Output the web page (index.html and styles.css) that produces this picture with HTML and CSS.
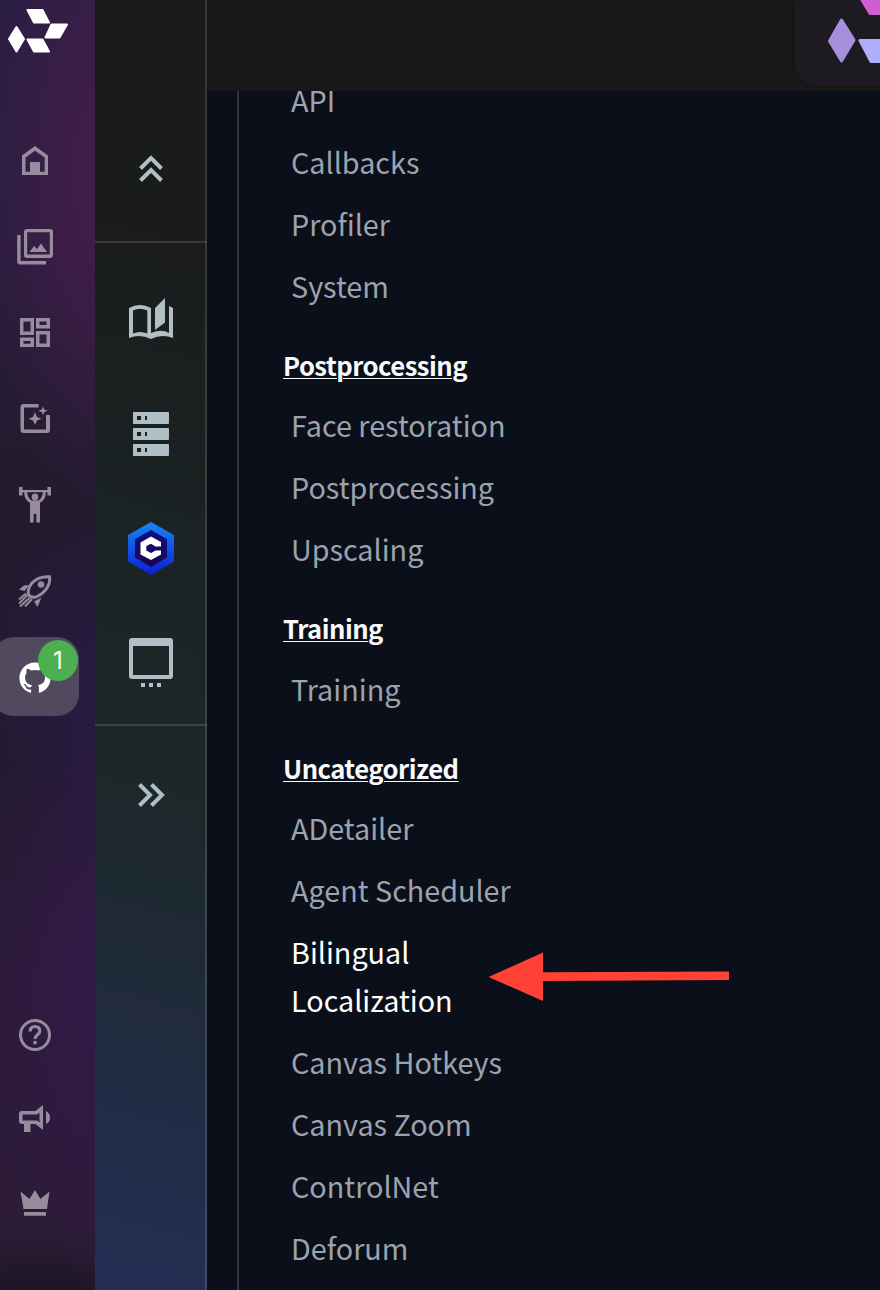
FILE: index.html
```html
<!DOCTYPE html>
<html lang="en">
<head>
<meta charset="utf-8">
<title>Settings</title>
<link rel="stylesheet" href="styles.css">
</head>
<body>
<div class="app">
  <nav class="rail">
    <a class="logo"><svg width="64" height="48" viewBox="6 7 64 48"><g fill="#fff" stroke="#fff" stroke-width="2" stroke-linejoin="round"><path d="M27.500 10H42.500L49 22.500H34Z"/><path d="M51.500 24.500H67L59.500 37.500H45.500Z"/><path d="M16.500 27L24 39L16.500 51.500L9 39Z"/><path d="M27.500 39.500H42.500L49 51.500H34Z"/></g></svg></a>
    <div class="rail-group rail-main">
      <a class="rail-item"><svg width="40" height="40" viewBox="15 141 40 40"><path fill-rule="evenodd" d="M35 146L48 155.500V175H22V155.500ZM35 150.800L25.500 157.500V171.700H30V162H40V171.700H44.700V157.500Z"/></svg></a>
      <a class="rail-item"><svg width="40" height="40" viewBox="15 227 40 40"><path fill-rule="evenodd" d="M27 229H50Q53 229 53 232V255Q53 258 50 258H27Q24 258 24 255V232Q24 229 27 229ZM27.200 232.200V254.500H49.800V232.200ZM17.200 235H20.600V261H46V264.400H20Q17.200 264.400 17.200 261.500ZM29.500 252L34 246L37 249L41 243.500L47 252Z"/></svg></a>
      <a class="rail-item"><svg width="40" height="40" viewBox="15 313 40 40"><path fill-rule="evenodd" d="M20 318H34V335H20ZM23.500 321.500V331.500H30.500V321.500ZM36 318H50V328.500H36ZM39.500 321.500V325H46.500V321.500ZM20 337.500H34V347H20ZM23.500 341V343.700H30.500V341ZM36 331H50V347H36ZM39.500 334.500V343.500H46.500V334.500Z"/></svg></a>
      <a class="rail-item"><svg width="40" height="40" viewBox="15 399 40 40"><path d="M38.500 404V407.500H24V429.500H46V415H50V430Q50 433 47 433H23.500Q20.500 433 20.500 430V407Q20.500 404 23.500 404ZM35 412.300L37 417L41.500 418.800L37 420.600L35 425L33 420.600L28.500 418.800L33 417ZM43 406.300L44.200 409.500L47.700 410.800L44.200 412L43 415.300L41.700 412L38.300 410.800L41.700 409.500Z"/></svg></a>
      <a class="rail-item"><svg width="40" height="40" viewBox="15 485 40 40"><path d="M19 487H22.500V490H47.500V487H51V495.500H47.500V492.300H45.800Q46 499.500 40 502.800V522.500H36.300V514H33.700V522.500H30V502.800Q24 499.500 24.200 492.300H22.500V495.500H19ZM27 492.300Q28 498.500 31.500 500.500H38.500Q42 498.500 43 492.300Z" fill-rule="evenodd"/><circle cx="35" cy="497" r="3.400"/></svg></a>
      <a class="rail-item"><svg width="40" height="40" viewBox="15 571 40 40"><path d="M49.500 576.700Q38 576 31.500 583.500Q27 590 28.500 594.500Q30.500 598 36 597Q44 593.500 47.500 587Q50.500 582 49.500 576.700Z" fill="none" stroke="#978b9d" stroke-width="3"/><circle cx="41" cy="584.500" r="3.300"/><path d="M29 585L24.500 591L19 589.500L24 585.500ZM41.500 597.500L37.500 607L34 601.500Z"/><path d="M27.500 595L19 603.500M30 597.500L20 606.500M26 593.500L19 599.500M32 599L25 606.500" fill="none" stroke="#978b9d" stroke-width="2"/></svg></a>
      <a class="rail-item active"><svg width="40" height="40" viewBox="15 656 40 40"><path transform="translate(16.300 658.300) scale(1.560)" d="M12,2A10,10 0 0,0 2,12C2,16.420 4.870,20.170 8.840,21.500C9.340,21.580 9.500,21.270 9.500,21C9.500,20.770 9.500,20.140 9.500,19.310C6.730,19.910 6.140,17.970 6.140,17.970C5.680,16.810 5.030,16.500 5.030,16.500C4.120,15.880 5.100,15.900 5.100,15.900C6.100,15.970 6.630,16.930 6.630,16.930C7.500,18.450 8.970,18 9.540,17.760C9.630,17.110 9.890,16.670 10.170,16.420C7.950,16.170 5.620,15.310 5.620,11.500C5.620,10.390 6,9.500 6.650,8.790C6.550,8.540 6.200,7.500 6.750,6.150C6.750,6.150 7.590,5.880 9.500,7.170C10.290,6.950 11.150,6.840 12,6.840C12.850,6.840 13.710,6.950 14.500,7.170C16.410,5.880 17.250,6.150 17.250,6.150C17.800,7.500 17.450,8.540 17.350,8.790C18,9.500 18.380,10.390 18.380,11.500C18.380,15.320 16.040,16.160 13.810,16.410C14.170,16.720 14.500,17.330 14.500,18.260C14.500,19.600 14.500,20.680 14.500,21C14.500,21.270 14.660,21.590 15.170,21.500C19.140,20.160 22,16.420 22,12A10,10 0 0,0 12,2Z"/></svg><span class="badge">1</span></a>
    </div>
    <div class="rail-group rail-foot">
      <a class="rail-item"><svg width="40" height="40" viewBox="0 0 40 40"><circle cx="20" cy="20" r="14.500" fill="none" stroke="#978b9d" stroke-width="3"/><path d="M15.200 16.500Q15.200 11.500 20 11.500T24.800 16.200C24.800 19.500 20 19.500 20 24" fill="none" stroke="#978b9d" stroke-width="3.200"/><path d="M18.300 26H21.700V29.300H18.300Z"/></svg></a>
      <a class="rail-item"><svg width="40" height="40" viewBox="15 1098 40 40"><path fill-rule="evenodd" d="M43 1104V1129L35.500 1123H30.500V1131H24V1123H22Q19 1123 19 1120V1113Q19 1110 22 1110H35.500ZM39.500 1111.500L37 1113.500H22.500V1119.600H37L39.500 1121.500ZM46 1110Q50 1112 50 1116.700T46 1123Z"/></svg></a>
      <a class="rail-item"><svg width="40" height="40" viewBox="15 1183 40 40"><path d="M20.500 1191.500L29.500 1199L35 1190L40.500 1199L49.500 1191.500L47 1209H23.500ZM24 1212H46V1215.700H24Z"/></svg></a>
    </div>
  </nav>

  <aside class="tools">
    <div class="tool-cell tool-up"><svg width="48" height="48" viewBox="127 145 48 48"><path class="chev" d="M140.500 168.500L151 158L161.500 168.500M140.500 180.500L151 170L161.500 180.500"/></svg></div>
    <div class="tool-list">
      <svg width="56" height="56" viewBox="123 291 56 56"><path fill-rule="evenodd" d="M129 308Q140 302 151 308V333Q162 328.500 169 333V306L173 308V338Q162 333.500 151 339Q140 333.500 129 338ZM133 310.500V333.500Q140 330.500 147.300 333.500V310.500Q140 307 133 310.500ZM165 298V322.500L155 330V308Z"/></svg>
      <svg width="56" height="56" viewBox="123 406 56 56"><path fill-rule="evenodd" d="M134 412H168Q169 412 169 413V423Q169 424 168 424H134Q133 424 133 423V413Q133 412 134 412ZM137 416V420H141V416ZM145 416V420H147V416ZM134 428H168Q169 428 169 429V439Q169 440 168 440H134Q133 440 133 439V429Q133 428 134 428ZM137 432V436H141V432ZM145 432V436H147V432ZM134 444H168Q169 444 169 445V455Q169 456 168 456H134Q133 456 133 455V445Q133 444 134 444ZM137 448V452H141V448ZM145 448V452H147V448Z"/></svg>
      <svg width="56" height="56" viewBox="123 520.500 56 56"><defs><linearGradient id="hex" x1="0" y1="0" x2="0" y2="1"><stop offset="0" stop-color="#1785f5"/><stop offset="1" stop-color="#0a20d0"/></linearGradient><linearGradient id="core" x1="0" y1="0" x2="0" y2="1"><stop offset="0" stop-color="#0d1080"/><stop offset="1" stop-color="#1c0450"/></linearGradient></defs><path fill="url(#hex)" d="M151 522.500L174 535.500V562L151 575.500L128 562V535.500Z"/><path fill="url(#core)" d="M151 530.500L167 539.700V558L151 567.500L135 558V539.700Z"/><path fill="#fff" d="M151 537L161 542.500V547H155.500L151 544.300L146.300 546.500V551L151 553.500L155.500 551H161V555L151 560.500L140.500 555V543Z"/></svg>
      <svg width="56" height="56" viewBox="123 635 56 56"><path fill-rule="evenodd" d="M132 638H170Q173 638 173 641V676Q173 679 170 679H132Q129 679 129 676V641Q129 638 132 638ZM133 646V675H169V646ZM141 683H145V687H141ZM149 683H153V687H149ZM157 683H161V687H157Z"/></svg>
    </div>
    <div class="tool-cell tool-more"><svg width="48" height="48" viewBox="127 771 48 48"><path class="chev" d="M139.500 784.500L150 795L139.500 805.500M151.500 784.500L162 795L151.500 805.500"/></svg></div>
  </aside>

  <main class="page">
    <header class="topbar">
      <div class="brand"><svg width="85" height="86" viewBox="795 0 85 86"><g stroke-width="3" stroke-linejoin="round"><path fill="#ce5fd3" stroke="#ce5fd3" d="M856 -10L870 13.500H890V-10Z"/><path fill="#a78fdd" stroke="#a78fdd" d="M841.500 20L854 40L841.500 61L829.500 41Z"/><path fill="#afaff9" stroke="#afaff9" d="M860 40.500H890V61.500H871Z"/></g></svg></div>
    </header>
    <div class="content">
      <div class="menu">
        <a>API</a><a>Callbacks</a><a>Profiler</a><a>System</a>
        <h2>Postprocessing</h2>
        <a>Face restoration</a><a>Postprocessing</a><a>Upscaling</a>
        <h2>Training</h2>
        <a>Training</a>
        <h2>Uncategorized</h2>
        <a>ADetailer</a><a>Agent Scheduler</a><a class="selected">Bilingual Localization</a><a>Canvas Hotkeys</a><a>Canvas Zoom</a><a>ControlNet</a><a>Deforum</a>
      </div>
    </div>
  </main>
  <svg class="pointer" width="242" height="50" viewBox="488 952 242 50"><path fill="#ff4136" d="M488.500 977L543 952.500V972.300L729 971.500V980L543 981V1001Z"/></svg>
</div>
</body>
</html>
```
FILE: styles.css
```css
* { box-sizing: border-box; }
body { margin: 0; background: #0b0f19; font-family: "Noto Sans CJK SC", "Noto Sans", sans-serif; }
svg { display: block; flex: none; }
.app { position: relative; display: flex; width: 880px; height: 1290px; overflow: hidden; }

.rail {
  width: 95px; display: flex; flex-direction: column; padding-top: 7px;
  background:
    radial-gradient(ellipse 100px 50px at 40px 1300px, rgba(20,16,26,.7), transparent),
    radial-gradient(ellipse 130px 330px at 110px 180px, #451d4c, rgba(69,29,76,0)),
    radial-gradient(ellipse 130px 170px at 110px 690px, #281b44, rgba(40,27,68,0)),
    radial-gradient(ellipse 120px 300px at 100px 980px, #331a49, rgba(51,26,73,0)),
    linear-gradient(#2a1e42 0, #2c1d40 18%, #241b30 35%, #231a30 58%, #2c1a38 75%, #2d1b38 94%, #251a2c);
}
.logo { padding-left: 6px; height: 111px; }
.rail-group { display: flex; flex-direction: column; }
.rail-item { position: relative; display: flex; align-items: center; height: 86px; padding-left: 15px; }
.rail-item svg { fill: #978b9d; }
.rail-item.active {
  width: 87px; height: 79px; margin: 3px 0 0 -8px; padding-left: 23px;
  border-radius: 22px; background: #514a5f;
}
.rail-item.active svg { fill: #fff; }
.badge {
  position: absolute; right: 1px; top: 3px; width: 40px; height: 41px; border-radius: 50%;
  background: #4caf50; color: #fff; text-align: center; font: 24px/42px Inter, sans-serif;
}
.rail-foot { margin-top: 277px; }
.rail-foot .rail-item { height: 84px; }

.tools {
  width: 112px; box-shadow: inset -2px 0 rgba(255,255,255,.13);
  background: linear-gradient(195deg, #1a1a1a 0, #1a1c1c 18%, #1b2324 43%, #1c282b 62%, #1f2a37 74%, #232c48 87%, #262e55 100%);
}
.tool-cell { display: flex; justify-content: center; }
.tool-up { height: 243px; padding-top: 145px; border-bottom: 2px solid rgba(255,255,255,.13); }
.tool-list {
  height: 483px; padding: 48px 0 33px; display: flex; flex-direction: column;
  align-items: center; justify-content: space-between; border-bottom: 2px solid rgba(255,255,255,.13);
}
.tools svg { fill: #b0bec5; }
.tools .chev { fill: none; stroke: #b0bec5; stroke-width: 4; }
.tool-more { padding-top: 45px; }

.page { flex: none; width: 673px; display: flex; flex-direction: column; }
.topbar { height: 91px; display: flex; justify-content: flex-end; align-items: flex-start; background: #181818; }
.brand { width: 85px; height: 86px; overflow: hidden; border-bottom-left-radius: 23px; background: #1d1a21; box-shadow: 0 0 12px rgba(0,0,0,.15); }
.content { height: 1199px; margin-left: 30px; border-left: 2px solid #2c3544; overflow: hidden; background: #0b0f19; }
.menu { width: 250px; margin: -22px 0 0 44px; }
.menu a { display: block; padding: 7px 0 7px 8px; font-size: 28.750px; line-height: 48px; color: #9ca3af; }
.menu .selected { color: #fff; }
.menu h2 { margin: 0; height: 77.400px; padding-top: 28px; font-size: 25.600px; font-weight: 700; letter-spacing: -.5px; line-height: 40px; color: #f9fafb; text-decoration: underline; text-decoration-thickness: 1px; text-underline-offset: 2px; }

.pointer { position: absolute; left: 488px; top: 952px; }
```
